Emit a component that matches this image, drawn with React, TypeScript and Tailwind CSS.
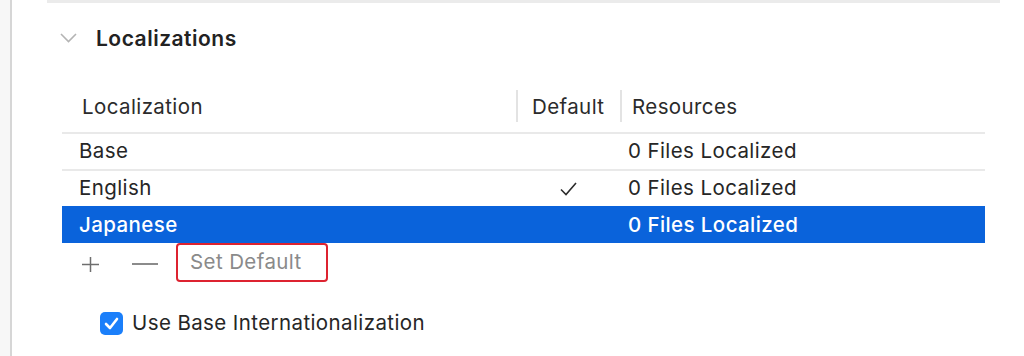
import React from 'react';

const rows = [
  { name: 'Base', isDefault: false, resources: '0 Files Localized' },
  { name: 'English', isDefault: true, resources: '0 Files Localized' },
  { name: 'Japanese', isDefault: false, resources: '0 Files Localized', selected: true },
];

const App: React.FC = () => {
  return (
    <div className="flex h-[356px] w-[1024px] overflow-hidden bg-white text-[#262626] [font-family:Inter,'Noto_Sans',sans-serif]">
      {/* sidebar edge */}
      <div className="w-[10px] bg-[#f7f7f7]" />
      <div className="w-[2px] bg-[#d6d6d6]" />

      <div className="flex flex-1 flex-col">
        <div className="ml-[35px] mr-[24px] h-[3px] bg-[#ebebeb]" />

        {/* section title */}
        <div className="ml-[48px] flex h-[72px] items-center">
          <svg width="17" height="10" viewBox="0 0 17 10" className="mt-[-2px]">
            <polyline points="1,1 8.5,8.5 16,1" fill="none" stroke="#b4b4b4" strokeWidth="1.6" />
          </svg>
          <span className="ml-[19px] text-[21px] font-semibold tracking-[0.5px] text-[#222]">Localizations</span>
        </div>

        {/* table */}
        <div className="ml-[50px] mt-[13px] w-[923px] text-[20.5px] tracking-[0.4px]">
          <div className="grid h-[44px] grid-cols-[454px_104px_1fr] items-start pt-[2px] text-[#2b2b2b]">
            <div className="flex h-[32px] items-center pl-[20px] pt-[3px]">Localization</div>
            <div className="flex h-[32px] items-center border-l-2 border-[#e3e3e3] pl-[14px] pt-[3px]">Default</div>
            <div className="flex h-[32px] items-center border-l-2 border-[#e3e3e3] pl-[10px] pt-[3px]">Resources</div>
          </div>
          {rows.map((row, i) => (
            <div
              key={i}
              className={
                row.selected
                  ? 'grid h-[37px] grid-cols-[454px_104px_1fr] items-center border-t-2 border-[#0a63db] bg-[#0a63db] font-medium text-white'
                  : 'grid h-[37px] grid-cols-[454px_104px_1fr] items-center border-t-2 border-[#e9e9e9] text-[#262626]'
              }
            >
              <div className="pl-[17px]">{row.name}</div>
              <div className="flex justify-center">
                {row.isDefault && (
                  <svg width="17" height="14" viewBox="0 0 17 14">
                    <polyline points="1,7.5 6,12.5 16,1" fill="none" stroke="#2b2b2b" strokeWidth="1.6" />
                  </svg>
                )}
              </div>
              <div className="pl-[8px]">{row.resources}</div>
            </div>
          ))}
        </div>

        {/* add / remove / set default */}
        <div className="ml-[69px] flex h-[39px] items-center">
          <svg width="19" height="17" viewBox="0 0 19 17" className="mt-[3px]">
            <line x1="9.5" y1="1" x2="9.5" y2="16" stroke="#6e6e6e" strokeWidth="1.5" />
            <line x1="1" y1="8.5" x2="18" y2="8.5" stroke="#6e6e6e" strokeWidth="1.5" />
          </svg>
          <svg width="26" height="4" viewBox="0 0 26 4" className="ml-[32px] mt-[3px]">
            <line x1="0" y1="2" x2="26" y2="2" stroke="#6e6e6e" strokeWidth="1.6" />
          </svg>
          <div className="ml-[18px] flex h-[39px] w-[152px] items-center rounded-[4px] border-2 border-[#dd2330] pl-[12px] text-[20.5px] tracking-[0.4px] text-[#8a8a8a]">
            Set Default
          </div>
        </div>

        {/* checkbox */}
        <div className="ml-[88px] mt-[26px] flex items-center">
          <div className="flex h-[23px] w-[23px] items-center justify-center rounded-[5px] bg-[#1b7ffa]">
            <svg width="15" height="13" viewBox="0 0 15 13">
              <polyline points="2,7 6,11 13,2" fill="none" stroke="white" strokeWidth="2.6" strokeLinecap="round" strokeLinejoin="round" />
            </svg>
          </div>
          <span className="ml-[9px] text-[20.5px] tracking-[0.4px] text-[#262626]">Use Base Internationalization</span>
        </div>
      </div>
    </div>
  );
};

export default App;
